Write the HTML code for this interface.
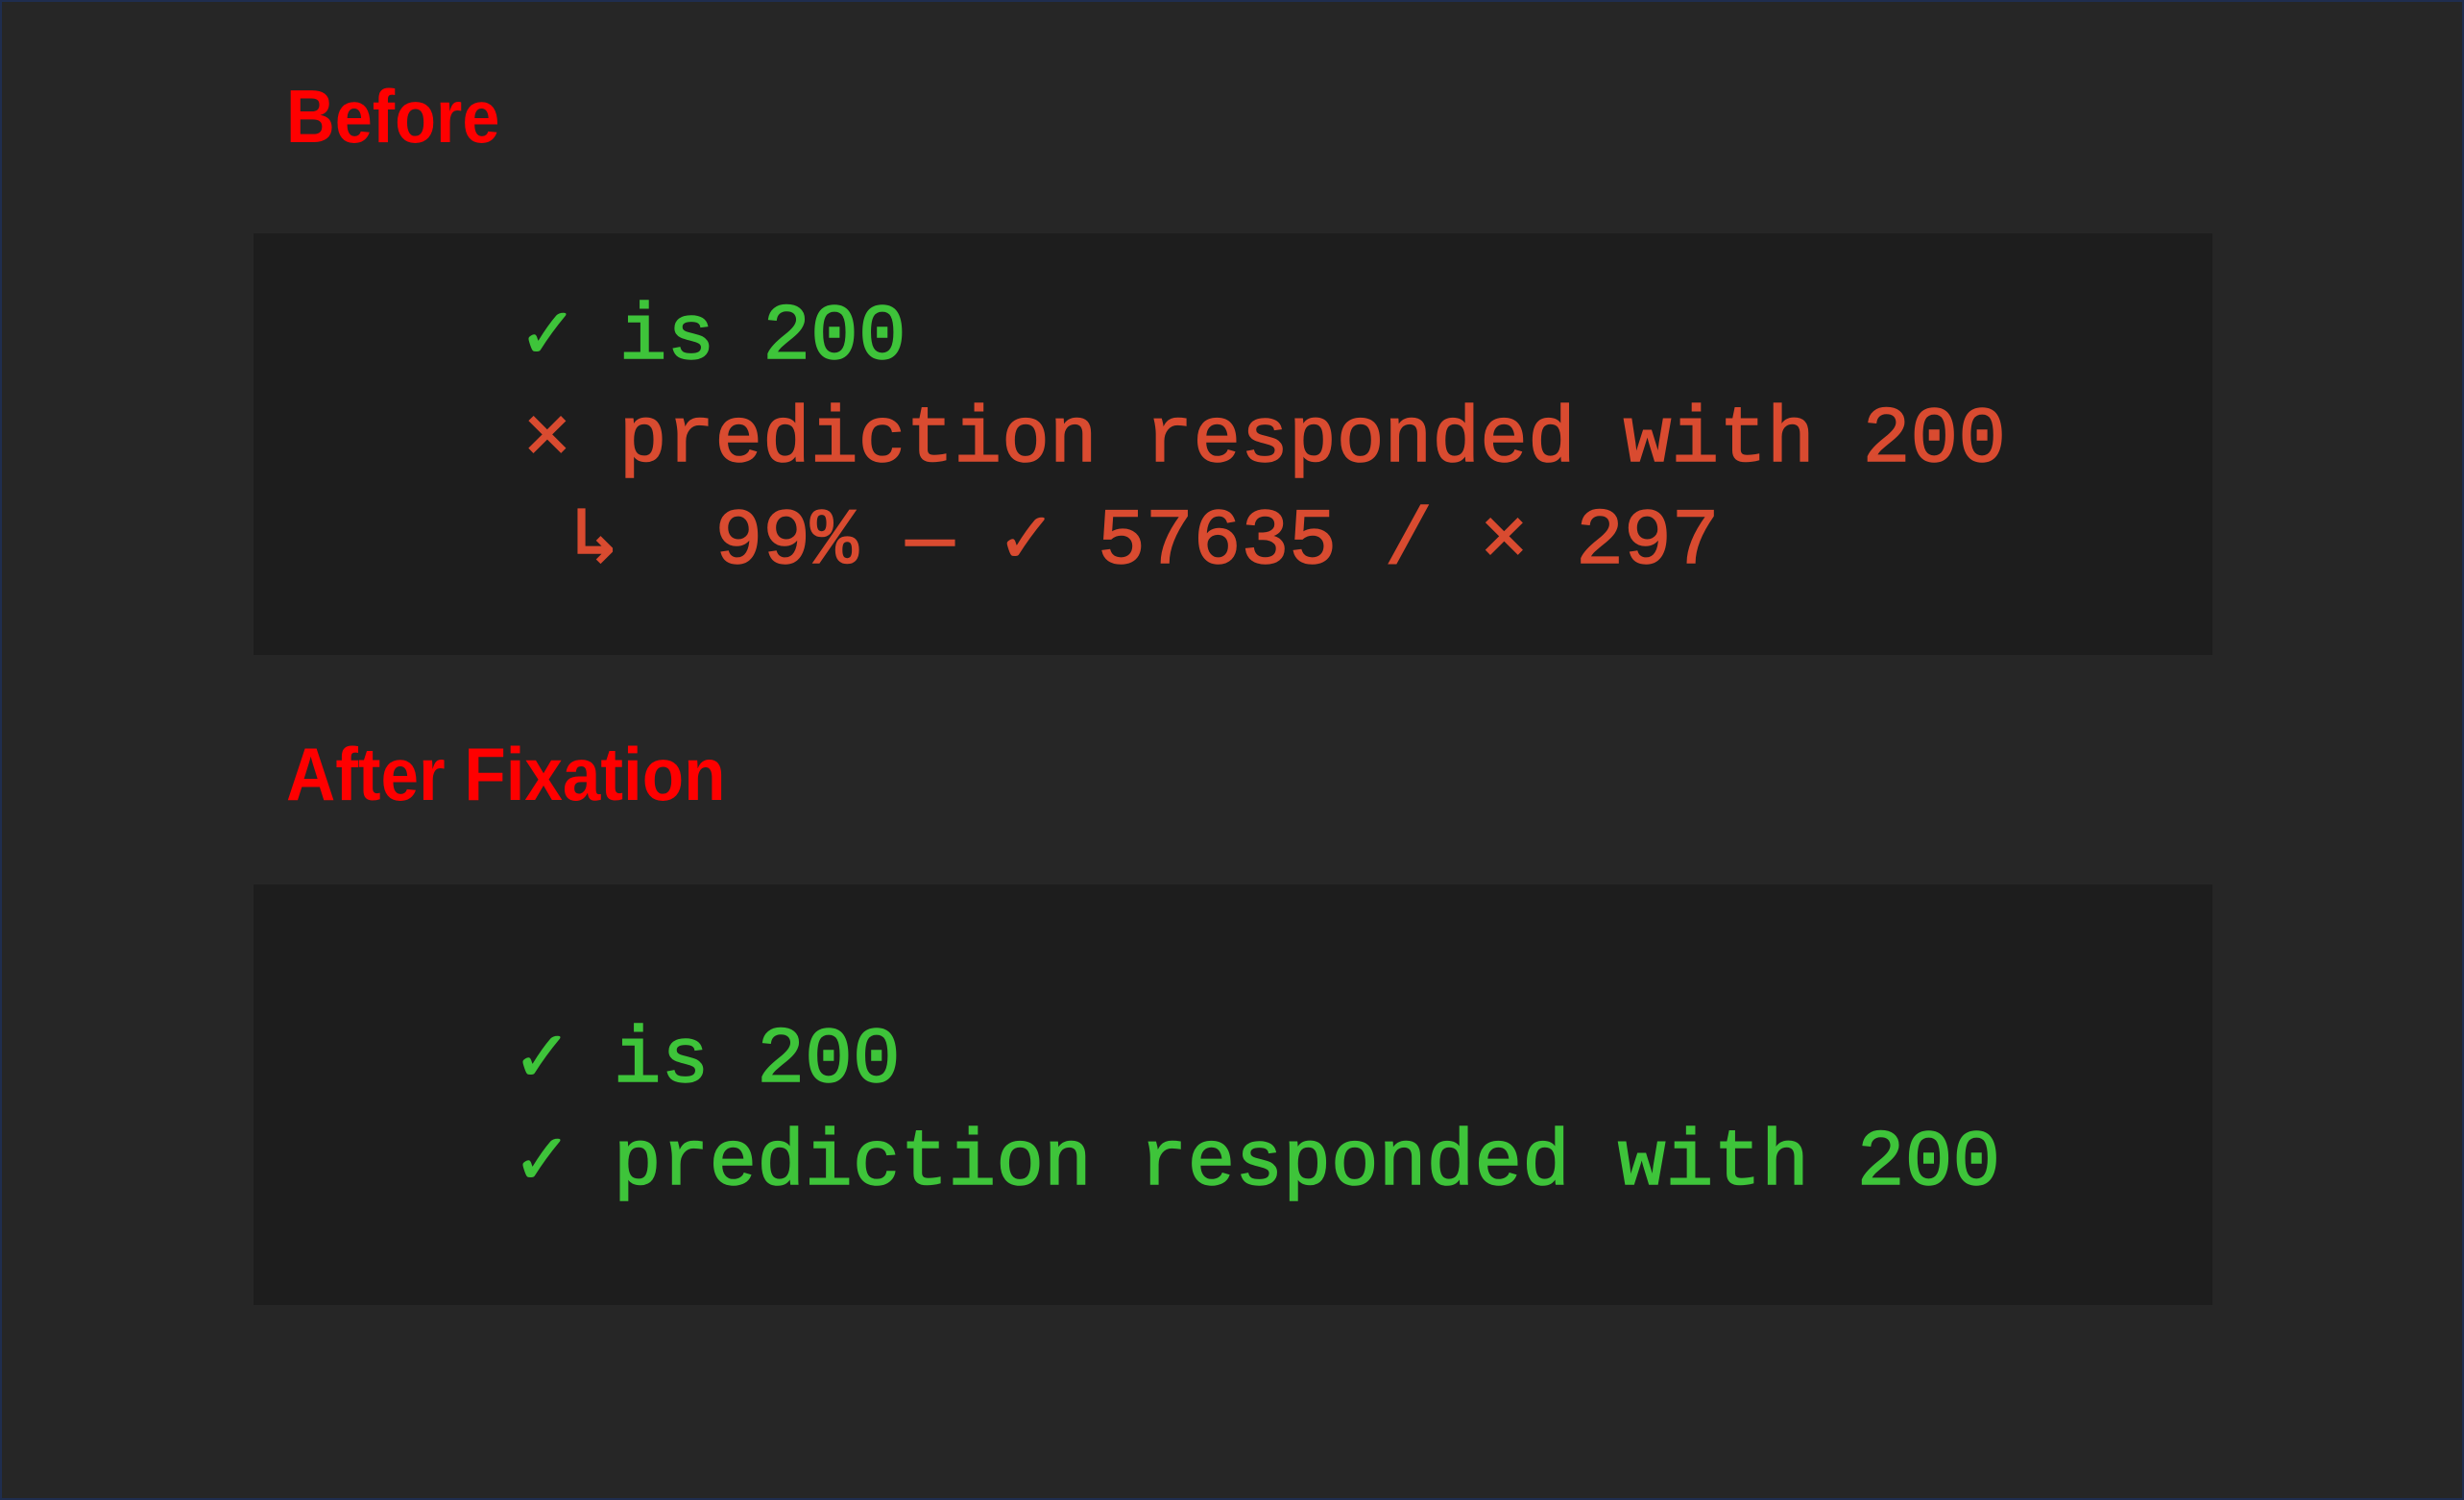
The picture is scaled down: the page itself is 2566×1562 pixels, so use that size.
<!DOCTYPE html>
<html><head><meta charset="utf-8"><style>
html,body{margin:0;padding:0}
body{width:2566px;height:1562px;background:#262626;position:relative;overflow:hidden;box-sizing:border-box;border:2px solid #1f2d4f}
.h{position:absolute;font-family:"Liberation Sans",sans-serif;font-weight:bold;font-size:78px;line-height:78px;color:#ff0000;transform-origin:0 0;white-space:pre}
.box{position:absolute;left:262px;width:2040px;background:#1d1d1d}
.m{position:absolute;font-family:"Liberation Mono","DejaVu Sans Mono",monospace;font-size:83px;line-height:106px;white-space:pre;-webkit-text-stroke:1.5px currentColor}
.g{color:#3ec43a}.r{color:#d94b30}
</style></head><body>
<div class="h" style="left:296px;top:80px;transform:scaleX(0.9)">Before</div>
<div class="box" style="top:241px;height:439px"></div>
<div class="m g" style="left:543px;top:296px">✓ is 200</div>
<div class="m r" style="left:543px;top:403px">× prediction responded with 200</div>
<div class="m r" style="left:543px;top:509px"> ↳  99% — ✓ 57635 / × 297</div>
<div class="h" style="left:296px;top:765px;transform:scaleX(0.91)">After Fixation</div>
<div class="box" style="top:919px;height:438px"></div>
<div class="m g" style="left:537px;top:1049px">✓ is 200</div>
<div class="m g" style="left:537px;top:1156px">✓ prediction responded with 200</div>
</body></html>
